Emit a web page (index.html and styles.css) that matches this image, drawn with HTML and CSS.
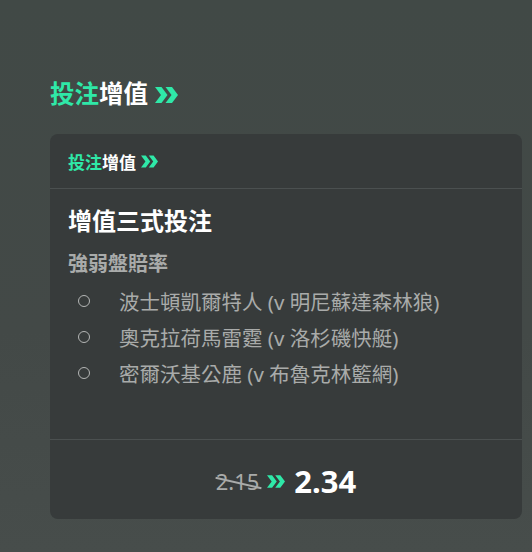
FILE: index.html
```html
<!DOCTYPE html>
<html lang="zh-Hant">

<head>
  <meta charset="UTF-8">
  <meta name="viewport" content="width=device-width, initial-scale=1.0">
  <title>投注增值</title>
  <link rel="stylesheet" href="styles.css">
</head>

<body>
  <div class="page">
    <h1 class="title"><span class="accent">投注</span>增值
      <svg class="chevrons" viewBox="0 0 23 16"><path d="M0 0h6.5l6 8-6 8H0l6-8zM10.5 0H17l6 8-6 8h-6.5l6-8z"/></svg>
    </h1>

    <div class="card">
      <div class="card-header">
        <span class="accent">投注</span>增值
        <svg class="chevrons small" viewBox="0 0 23 16"><path d="M0 0h6.5l6 8-6 8H0l6-8zM10.5 0H17l6 8-6 8h-6.5l6-8z"/></svg>
      </div>

      <div class="card-body">
        <h2>增值三式投注</h2>
        <h3>強弱盤賠率</h3>
        <ul class="picks">
          <li><span class="ring"></span>波士頓凱爾特人 (v 明尼蘇達森林狼)</li>
          <li><span class="ring"></span>奧克拉荷馬雷霆 (v 洛杉磯快艇)</li>
          <li><span class="ring"></span>密爾沃基公鹿 (v 布魯克林籃網)</li>
        </ul>
      </div>

      <div class="card-footer">
        <span class="old-odds">2.15</span>
        <svg class="chevrons odds" viewBox="0 0 23 16"><path d="M0 0h6.5l6 8-6 8H0l6-8zM10.5 0H17l6 8-6 8h-6.5l6-8z"/></svg>
        <span class="new-odds">2.34</span>
      </div>
    </div>
  </div>
</body>

</html>
```

FILE: styles.css
```css
* {
  margin: 0;
  padding: 0;
  box-sizing: border-box;
}

body {
  background: linear-gradient(180deg, #414946 0%, #434947 60%, #474d4b 100%);
  min-height: 552px;
  font-family: "Noto Sans", "Noto Sans CJK TC", sans-serif;
  color: #fff;
}

.page {
  padding: 79px 10px 0 50px;
}

.accent {
  color: #2fe8a8;
}

.chevrons {
  fill: #2fe8a8;
}

.title {
  display: flex;
  align-items: center;
  font-size: 24.5px;
  line-height: 30px;
  font-weight: 700;
}

.title .chevrons {
  width: 23px;
  height: 16px;
  margin: 2px 0 0 7px;
}

.card {
  margin-top: 25px;
  width: 472px;
  height: 385px;
  background-color: #373b3b;
  border-radius: 8px;
  display: flex;
  flex-direction: column;
}

.card-header {
  display: flex;
  align-items: center;
  height: 55px;
  padding: 0 18px;
  border-bottom: 1px solid #4b5050;
  font-size: 17px;
  font-weight: 700;
}

.card-header .chevrons {
  width: 17px;
  height: 13px;
  margin: 1px 0 0 5px;
}

.card-body {
  flex: 1;
  padding: 17px 18px 0;
}

.card-body h2 {
  font-size: 24px;
  line-height: 30px;
  font-weight: 700;
}

.card-body h3 {
  margin-top: 15px;
  font-size: 20px;
  line-height: 26px;
  font-weight: 700;
  color: #a9abaa;
}

.picks {
  list-style: none;
  margin-top: 6px;
}

.picks li {
  display: flex;
  align-items: center;
  height: 36px;
  font-size: 20.5px;
  color: #a9abaa;
}

.ring {
  width: 12px;
  height: 12px;
  border: 1.5px solid #b4b6b5;
  border-radius: 50%;
  margin: 0 29px 0 10px;
}

.card-footer {
  display: flex;
  justify-content: center;
  align-items: center;
  height: 80px;
  border-top: 1px solid #4b5050;
  padding-top: 3px;
}

.old-odds {
  position: relative;
  font-size: 22px;
  color: #a9abaa;
}

.old-odds::after {
  content: "";
  position: absolute;
  left: -1px;
  right: -2px;
  top: 52%;
  height: 2px;
  background-color: #a9abaa;
  transform: rotate(13deg);
}

.odds {
  width: 18px;
  height: 15px;
  margin: 0 9px 0 8px;
}

.new-odds {
  font-size: 31px;
  font-weight: 700;
}
```
